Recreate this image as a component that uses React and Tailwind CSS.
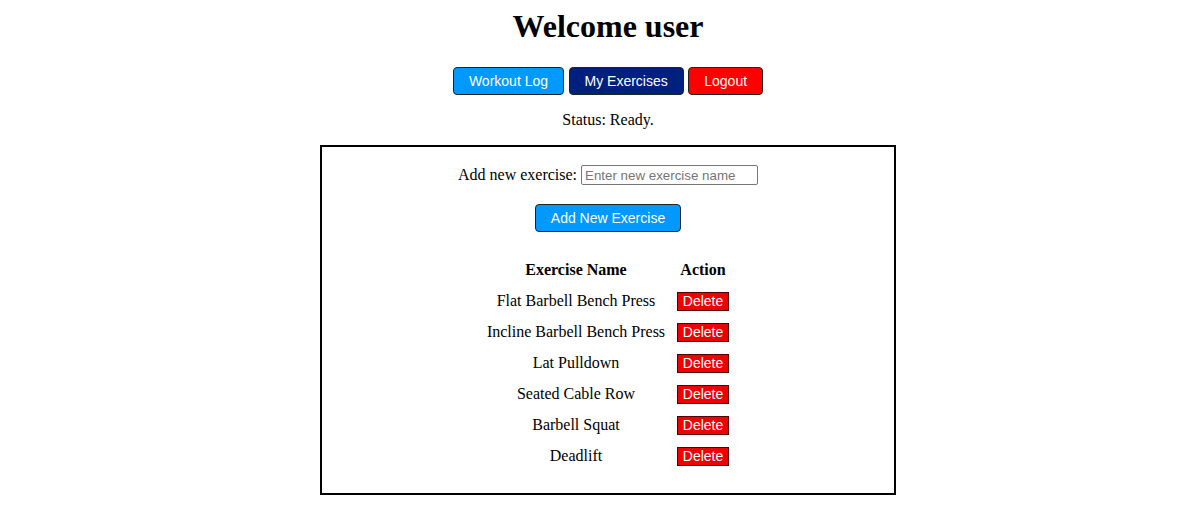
import React, { useState } from 'react';

const exercises = [
  'Flat Barbell Bench Press',
  'Incline Barbell Bench Press',
  'Lat Pulldown',
  'Seated Cable Row',
  'Barbell Squat',
  'Deadlift',
];

const btn = "h-[28px] px-[15px] rounded-[4px] border border-[#222] text-white text-[14px] leading-[16px] font-['Liberation_Sans',Arial,sans-serif]";

export default function App() {
  const [name, setName] = useState('');

  return (
    <div className="w-[1200px] pl-4 font-['Liberation_Serif','Times_New_Roman',serif] text-black text-[16px] flex flex-col items-center">
      <h1 className="mt-[8px] text-[32px] leading-[37px] font-bold">Welcome user</h1>

      <div className="mt-[22px] flex gap-[4.5px]">
        <button type="button" className={`${btn} bg-[#0099ff]`}>Workout Log</button>
        <button type="button" className={`${btn} bg-[#00207f]`}>My Exercises</button>
        <button type="button" className={`${btn} bg-[#ff0000]`}>Logout</button>
      </div>

      <p className="mt-[16px] leading-[18px]">Status: Ready.</p>

      <div className="mt-[16px] w-[576px] border-2 border-black pt-[18px] pb-[22px] flex flex-col items-center">
        <div className="flex items-center h-[20px]">
          <span className="leading-[18px]">Add new exercise:</span>
          <input
            value={name}
            onChange={(e) => setName(e.target.value)}
            placeholder="Enter new exercise name"
            className="ml-[4px] w-[177px] h-[20px] px-[3px] border border-[#767676] rounded-[2px] text-[13.33px] font-['Liberation_Sans',Arial,sans-serif] placeholder:text-[#757575] outline-none"
          />
        </div>

        <button type="button" className={`${btn} mt-[19px] bg-[#0099ff]`}>Add New Exercise</button>

        <table className="mt-[23px] w-[254px] border-collapse">
          <thead>
            <tr className="h-[30px]">
              <th className="w-[190px] font-bold text-center">Exercise Name</th>
              <th className="w-[64px] font-bold text-center">Action</th>
            </tr>
          </thead>
          <tbody>
            {exercises.map((ex) => (
              <tr key={ex} className="h-[31px]">
                <td className="text-center">{ex}</td>
                <td className="text-center">
                  <button
                    type="button"
                    className="h-[19px] px-[5px] bg-[#ee0000] border border-[#550000] text-white text-[14px] leading-[15px] font-['Liberation_Sans',Arial,sans-serif] align-middle"
                  >
                    Delete
                  </button>
                </td>
              </tr>
            ))}
          </tbody>
        </table>
      </div>
    </div>
  );
}
